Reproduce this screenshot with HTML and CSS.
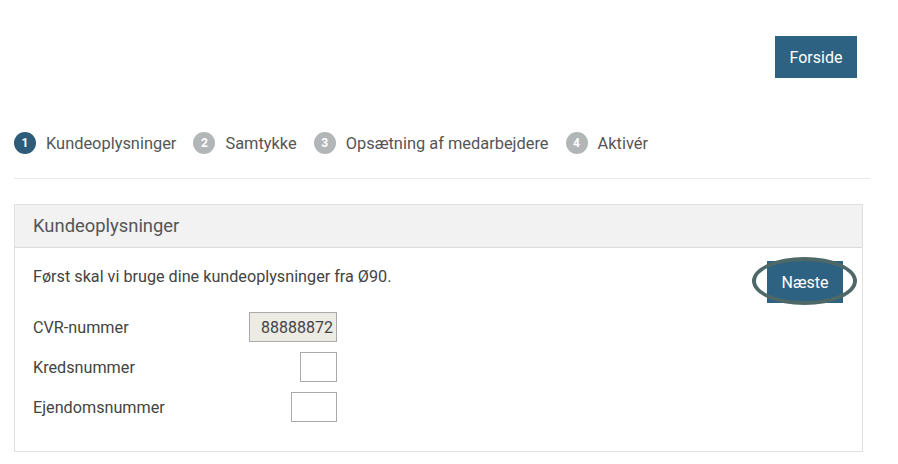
FILE: index.html
```html
<!DOCTYPE html>
<html lang="da">
<head>
    <meta charset="UTF-8">
    <meta name="viewport" content="width=device-width, initial-scale=1.0">
    <title>Kundeoplysninger</title>
    <link rel="stylesheet" href="styles.css">
</head>
<body>
    <header class="top">
        <button class="btn">Forside</button>
    </header>
    <main>
        <ol class="steps">
            <li class="step active"><span class="num">1</span>Kundeoplysninger</li>
            <li class="step"><span class="num">2</span>Samtykke</li>
            <li class="step"><span class="num">3</span>Opsætning af medarbejdere</li>
            <li class="step"><span class="num">4</span>Aktivér</li>
        </ol>
        <hr class="divider">

        <section class="panel">
            <div class="panel-head">Kundeoplysninger</div>
            <div class="panel-body">
                <div class="intro">
                    <p>Først skal vi bruge dine kundeoplysninger fra Ø90.</p>
                    <button class="btn btn-next">Næste</button>
                </div>
                <form class="fields">
                    <div class="field">
                        <label for="cvr">CVR-nummer</label>
                        <input id="cvr" class="cvr" type="text" value="88888872" readonly>
                    </div>
                    <div class="field">
                        <label for="kreds">Kredsnummer</label>
                        <input id="kreds" class="kreds" type="text">
                    </div>
                    <div class="field">
                        <label for="ejendom">Ejendomsnummer</label>
                        <input id="ejendom" class="ejendom" type="text">
                    </div>
                </form>
            </div>
        </section>
    </main>
</body>
</html>
```

FILE: styles.css
```css
body {
    font-family: Roboto, 'Liberation Sans', sans-serif;
    margin: 0;
    padding: 0;
    background: #fff;
    color: #444;
    font-size: 16.2px;
}
.top {
    display: flex;
    justify-content: flex-end;
    padding: 36px 41px 0 0;
}
.btn {
    font-family: inherit;
    background-color: #2d6282;
    color: #fff;
    border: none;
    border-radius: 0;
    font-size: 16px;
    cursor: pointer;
}
.top .btn {
    width: 82px;
    height: 42px;
}
main {
    padding: 0 28px 0 14px;
}
.steps {
    list-style: none;
    display: flex;
    margin: 54px 0 0;
    padding: 0;
    height: 22px;
}
.step {
    display: flex;
    align-items: center;
    margin-right: 17px;
    font-size: 16.4px;
    color: #555;
}
.num {
    display: inline-flex;
    align-items: center;
    justify-content: center;
    width: 22px;
    height: 22px;
    border-radius: 50%;
    background: #b2b6b7;
    color: #fff;
    font-size: 12px;
    font-weight: bold;
    margin-right: 10px;
}
.step.active .num {
    background: #2d5b78;
}
.divider {
    border: none;
    border-top: 1px solid #ebebeb;
    margin: 24px 0 0;
}
.panel {
    margin: 25px 7px 0 0;
    border: 1px solid #e0e0e0;
}
.panel-head {
    background: #f2f2f2;
    border-bottom: 1px solid #dcdcdc;
    height: 42px;
    line-height: 42px;
    padding: 0 18px;
    font-size: 18.4px;
    color: #555;
}
.panel-body {
    padding: 13px 19px 29px 18px;
}
.intro {
    display: flex;
    justify-content: space-between;
    align-items: flex-start;
}
.intro p {
    margin: 6px 0 0;
    line-height: 20px;
}
.btn-next {
    position: relative;
    width: 76px;
    height: 42px;
}
.btn-next::after {
    content: "";
    position: absolute;
    left: -15px;
    top: -4px;
    width: 97px;
    height: 40px;
    border: 4px solid #4e6868;
    border-radius: 50%;
}
.fields {
    margin-top: 9px;
    width: 304px;
}
.field {
    display: flex;
    justify-content: space-between;
    align-items: center;
    margin-bottom: 10px;
}
.field:last-child {
    margin-bottom: 0;
}
.field input {
    font-family: inherit;
    font-size: 16px;
    color: #444;
    height: 30px;
    box-sizing: border-box;
    border: 1px solid #aaa;
    padding: 0 3px;
    text-align: right;
}
.field .cvr {
    width: 88px;
    background: #ecebe4;
}
.field .kreds {
    width: 37px;
}
.field .ejendom {
    width: 46px;
}
```
